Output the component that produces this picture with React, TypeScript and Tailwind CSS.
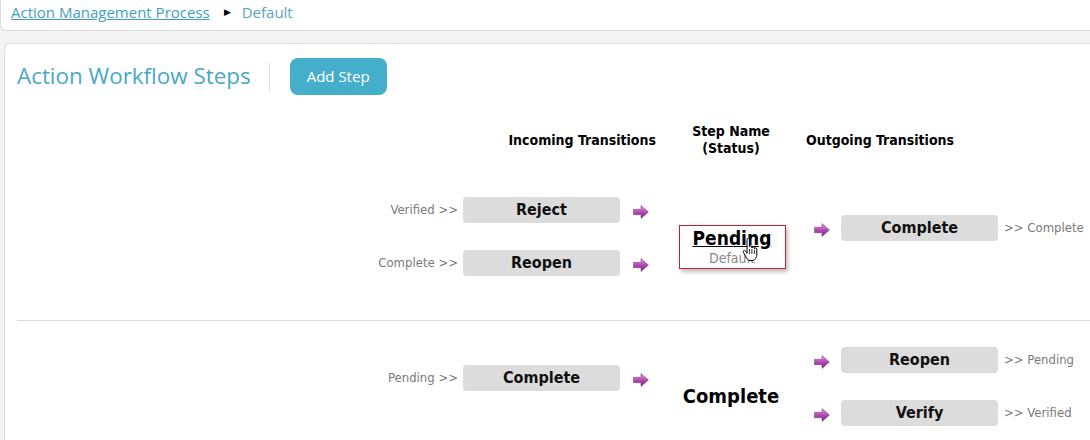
import React from "react";

const tbl = { fontFamily: '"DejaVu Sans Condensed", "DejaVu Sans", sans-serif' };
const ui = { fontFamily: '"Open Sans", "Noto Sans", sans-serif' };

function Arrow() {
  return (
    <svg width="16" height="14" viewBox="0 0 16 14" className="block">
      <defs>
        <linearGradient id="ag" x1="0" y1="0" x2="0" y2="1">
          <stop offset="0" stopColor="#e39ee3" />
          <stop offset="0.5" stopColor="#b04cb0" />
          <stop offset="1" stopColor="#74207a" />
        </linearGradient>
      </defs>
      <path d="M0.5 4.3 H8 V0.6 L15.4 7 L8 13.4 V9.7 H0.5 Z" fill="url(#ag)" stroke="#8a3f8c" strokeWidth="0.6" />
    </svg>
  );
}

function TBtn({ label }: { label: string }) {
  return (
    <div className="w-[157px] h-[26px] rounded-[4px] bg-[#dcdcdc] flex items-center justify-center text-[16px] font-bold text-[#111]" style={tbl}>
      {label}
    </div>
  );
}

function Incoming({ from, label }: { from: string; label: string }) {
  return (
    <div className="flex items-center h-[26px]">
      <div className="w-[446px] pr-[5px] text-right text-[13px] text-[#7a7a7a]" style={tbl}>{from} &gt;&gt;</div>
      <TBtn label={label} />
      <div className="w-[40px] flex justify-center pt-[4px] pl-[2px]"><Arrow /></div>
    </div>
  );
}

function Outgoing({ to, label }: { to: string; label: string }) {
  return (
    <div className="flex items-center h-[26px]">
      <div className="w-[39px] flex justify-center pt-[4px]"><Arrow /></div>
      <TBtn label={label} />
      <div className="pl-[6px] text-[13px] text-[#7a7a7a] whitespace-nowrap" style={tbl}>&gt;&gt; {to}</div>
    </div>
  );
}

function Hand() {
  return (
    <svg width="18" height="24" viewBox="0 0 18 24" className="absolute left-[62px] top-[12px]">
      <path
        d="M5 2 C5 1 5.6 0.5 6.2 0.5 C6.9 0.5 7.4 1 7.4 2 V9 C7.4 8.2 8 7.7 8.7 7.7 C9.4 7.7 9.9 8.2 9.9 9 V10 C9.9 9.2 10.5 8.8 11.2 8.8 C11.9 8.8 12.4 9.3 12.4 10 V11 C12.4 10.3 13 9.9 13.6 9.9 C14.3 9.9 14.8 10.4 14.8 11.2 V16 C14.8 19.5 13 22.5 10 22.5 H8 C6 22.5 5 21 4 19 L1.5 14.5 C1 13.5 1.3 12.7 2 12.5 C2.7 12.3 3.3 12.7 3.8 13.4 L5 15.2 Z"
        fill="#fff"
        stroke="#000"
        strokeWidth="1"
      />
      <path d="M7.4 11 V16 M9.9 11 V16 M12.4 12 V16" stroke="#000" strokeWidth="0.8" />
    </svg>
  );
}

export default function App() {
  return (
    <div className="w-[1090px] h-[440px] bg-[#f4f4f4] overflow-hidden">
      <div className="h-[31px] bg-white border-b border-l border-[#dcdcdc] rounded-bl-[6px] flex items-center pl-[10px] pb-[6px] text-[15px]" style={ui}>
        <span className="text-[#3f9fc0] underline">Action Management Process</span>
        <span className="ml-[14px] mr-[11px] text-[9px] text-black">&#9654;</span>
        <span className="text-[#5aa3bd]">Default</span>
      </div>
      <div className="mt-[12px] ml-[4px] h-[420px] bg-white border-t border-l border-[#dcdcdc] rounded-tl-[6px] pl-[12px]">
        <div className="flex items-center pt-[14px] h-[37px] box-content">
          <div className="text-[22.4px] text-[#4aa8c6] leading-none" style={ui}>Action Workflow Steps</div>
          <div className="ml-[18px] w-px h-[28px] bg-[#dddddd]" />
          <div className="ml-[20px] w-[97px] h-[37px] rounded-[8px] bg-[#45afcb] text-white text-[15px] flex items-center justify-center" style={ui}>
            Add Step
          </div>
        </div>
        <div className="flex items-center h-[34px] mt-[28px] text-[14px] font-bold text-black leading-[17px]" style={tbl}>
          <div className="w-[643px] text-right pr-[4px]">Incoming Transitions</div>
          <div className="w-[142px] text-center">Step Name<br />(Status)</div>
          <div className="pl-[4px]">Outgoing Transitions</div>
        </div>
        <div className="flex h-[164px] border-b border-[#dcdcdc]">
          <div className="w-[643px] pt-[40px] flex flex-col gap-[27px]">
            <Incoming from="Verified" label="Reject" />
            <Incoming from="Complete" label="Reopen" />
          </div>
          <div className="w-[142px] pt-[68px] flex justify-center pl-[2px]">
            <div className="relative w-[107px] h-[44px] border border-[#c8202e] shadow-[2px_3px_4px_rgba(0,0,0,0.25)] flex flex-col items-center pt-[1px]" style={tbl}>
              <div className="text-[19px] font-bold text-black underline leading-[23px]">Pending</div>
              <div className="text-[14px] text-[#8a8a8a] leading-[16px]">Default</div>
              <Hand />
            </div>
          </div>
          <div className="flex-1 pt-[58px] flex flex-col">
            <Outgoing label="Complete" to="Complete" />
          </div>
        </div>
        <div className="flex h-[120px]">
          <div className="w-[643px] pt-[44px] flex flex-col">
            <Incoming from="Pending" label="Complete" />
          </div>
          <div className="w-[142px] pt-[63px] text-center text-[20px] font-bold text-black leading-[24px]" style={tbl}>
            Complete
          </div>
          <div className="flex-1 pt-[26px] flex flex-col gap-[27px]">
            <Outgoing label="Reopen" to="Pending" />
            <Outgoing label="Verify" to="Verified" />
          </div>
        </div>
      </div>
    </div>
  );
}
